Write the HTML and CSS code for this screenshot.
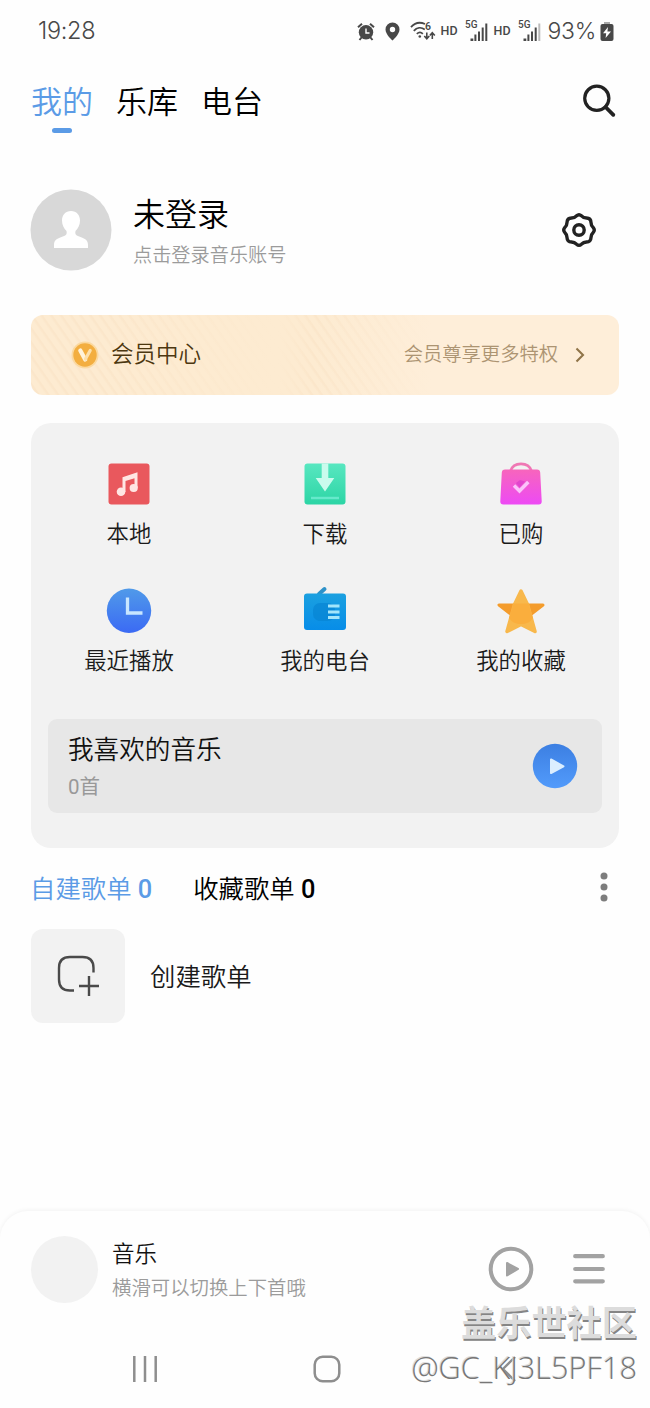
FILE: index.html
```html
<!DOCTYPE html>
<html lang="zh-CN">
<head>
<meta charset="utf-8">
<title>我的音乐</title>
<link rel="stylesheet" href="styles.css">
</head>
<body>
<div class="phone">
  <header class="status">
    <span class="time">19:28</span>
    <div class="status-icons">
      <svg class="alarm" width="18" height="19" viewBox="0 0 18 19"><circle cx="9" cy="10.3" r="7.200" fill="#484848"/><path d="M1 5.3 5 1.8M17 5.3 13 1.8M4.500 15.500 2.500 18M13.500 15.500l2 2.500" stroke="#484848" stroke-width="2" fill="none"/><path d="M9 6.500v4.500h3.500" stroke="#fff" stroke-width="1.400" fill="none"/></svg>
      <svg class="pin" width="15" height="19" viewBox="0 0 15 19"><path fill-rule="evenodd" d="M7.500.5a7 7 0 0 0-7 7c0 5 7 11 7 11s7-6 7-11a7 7 0 0 0-7-7Zm0 4.300a2.700 2.700 0 1 1 0 5.400 2.700 2.700 0 0 1 0-5.400Z" fill="#484848"/></svg>
      <svg class="wifi" width="26" height="20" viewBox="0 0 26 20"><g fill="none" stroke="#484848" stroke-width="1.800"><path d="M1 6.200C5 1.500 10.500 1 15 3M3.800 9.800c3-3.400 7.400-3.800 11-1.400M6.800 12.800c2-1.800 4.300-1.800 6 0"/><path d="M16.800 11.500v6M14.300 15l2.500 2.800 2.500-2.800M22.300 18v-6M19.800 14.500l2.500-2.800 2.500 2.800" stroke-width="1.600"/></g><circle cx="9.800" cy="15.500" r="1.300" fill="#484848"/><text x="15" y="9" class="wifi-num">6</text></svg>
      <span class="hd">HD</span>
      <svg class="signal" width="25" height="22" viewBox="0 0 25 22"><text x="0" y="8" class="net">5G</text><path d="M5.500 18.500h2.800v2.500H5.500ZM9.400 14.500h2v6.500h-2ZM13 11.500h2V21h-2ZM16.700 7.500h2V21h-2ZM20.300 3.500h2V21h-2Z" fill="#484848"/></svg>
      <span class="hd">HD</span>
      <svg class="signal" width="25" height="22" viewBox="0 0 25 22"><text x="0" y="8" class="net">5G</text><path d="M5.500 18.500h2.800v2.500H5.500ZM9.400 14.500h2v6.500h-2ZM13 11.500h2V21h-2ZM16.700 7.500h2V21h-2Z" fill="#484848"/><path d="M20.300 3.500h2V21h-2Z" fill="#bbb"/></svg>
      <span class="percent">93%</span>
      <svg class="battery" width="14" height="19" viewBox="0 0 14 19"><path d="M4 0h6v2H4Z" fill="#aaa"/><rect x=".5" y="2" width="13" height="17" rx="2" fill="#484848"/><path d="m8 5-5 6.200h3.200L5.600 16 11 9.600H7.400Z" fill="#fff"/></svg>
    </div>
  </header>

  <nav class="tabs">
    <span class="tab active">我的</span>
    <span class="tab">乐库</span>
    <span class="tab">电台</span>
    <svg class="search" width="34" height="34" viewBox="0 0 34 34" fill="none" stroke="#222"><circle cx="14.800" cy="14.300" r="12.100" stroke-width="3.200"/><path d="m23.500 23 7.800 7.800" stroke-width="3.800" stroke-linecap="round"/></svg>
  </nav>

  <section class="profile">
    <svg class="avatar" width="82" height="82" viewBox="0 0 82 82"><circle cx="41" cy="41" r="40.500" fill="#d8d8d8"/><path d="M41 22c5.500 0 9 4 9 9.500 0 4.500-2 8-4.500 10.500-.8 3 .5 4.300 3 5.300C54 49.500 58 50.500 58 56v3H24v-3c0-5.500 4-6.500 9.500-8.700 2.500-1 3.800-2.300 3-5.300C34 39.500 32 36 32 31.500 32 26 35.500 22 41 22Z" fill="#fff"/></svg>
    <div class="profile-text">
      <span class="name">未登录</span>
      <span class="hint">点击登录音乐账号</span>
    </div>
    <svg class="gear" width="36" height="36" viewBox="0 0 36 36" fill="none" stroke="#222" stroke-width="3.400" stroke-linejoin="round"><path d="M15.500 3.800Q18 1.700 20.500 3.800Q22.500 6 25.500 6Q29.800 6 30 10.500Q30 13.500 32.200 15.500Q34.300 18 32.200 20.500Q30 22.500 30 25.500Q29.800 30 25.500 30Q22.500 30 20.500 32.200Q18 34.300 15.500 32.200Q13.500 30 10.500 30Q6.200 30 6 25.500Q6 22.500 3.800 20.500Q1.700 18 3.800 15.500Q6 13.500 6 10.500Q6.200 6 10.500 6Q13.500 6 15.500 3.800Z"/><circle cx="18" cy="18" r="5.200"/></svg>
  </section>

  <section class="vip">
    <svg class="coin" width="28" height="28" viewBox="0 0 28 28"><circle cx="14" cy="14" r="13.500" fill="#fbd9a0"/><circle cx="14" cy="14" r="11.700" fill="#f3ae40"/><path d="M9.300 9.500 14.200 18.500" stroke="#fff3da" stroke-width="4.200" stroke-linecap="round"/><path d="m14.500 18 4.700-8.500" stroke="#fde0aa" stroke-width="3.200" stroke-linecap="round"/></svg>
    <span class="vip-title">会员中心</span>
    <span class="vip-hint">会员尊享更多特权</span>
    <svg class="chevron" width="10" height="16" viewBox="0 0 10 16"><path d="m1.500 1.500 6.500 6.500-6.500 6.500" fill="none" stroke="#8f7448" stroke-width="2.100"/></svg>
  </section>

  <section class="library">
    <div class="grid">
      <div class="item">
        <svg width="52" height="52" viewBox="0 0 52 52"><rect x="5.500" y="5.500" width="41" height="41" rx="3" fill="#e9585d"/><path d="M19.500 19.300 34.500 14.200V30h-3V20.300l-9 2.800V34h-3Z" fill="#ffe6e3"/><circle cx="18" cy="33.700" r="4.300" fill="#ffe6e3"/><circle cx="30.700" cy="30" r="4.100" fill="#ffe6e3"/></svg>
        <span>本地</span>
      </div>
      <div class="item">
        <svg width="52" height="52" viewBox="0 0 52 52"><defs><linearGradient id="down" x2="0" y2="1"><stop stop-color="#58e7c0"/><stop offset="1" stop-color="#2cd5a5"/></linearGradient></defs><rect x="5.500" y="5.500" width="41" height="41" rx="3" fill="url(#down)"/><path d="M22.700 5.500h6.600V20h6L26 33.500 16.700 20h6Z" fill="#c9fbed"/><path d="M12 40h28" stroke="#66e9cb" stroke-width="2.500"/></svg>
        <span>下载</span>
      </div>
      <div class="item">
        <svg width="52" height="52" viewBox="0 0 52 52"><defs><linearGradient id="bag" x2="0" y2="1"><stop stop-color="#f765bc"/><stop offset="1" stop-color="#ed4af5"/></linearGradient></defs><path d="M15.500 13c3-9.500 18-9.500 21 0" fill="none" stroke="#ef78b4" stroke-width="2.600"/><path d="M10 11.500h32q3 0 3.200 3L46.700 43q.3 3.500-3 3.500H8.300q-3.300 0-3-3.500L6.800 14.500q.2-3 3.200-3Z" fill="url(#bag)"/><path d="m21 25 4-3 5 1.500-5.500 6Z" fill="#d337c9" opacity=".6"/><path d="m19 27.500 5.500 5.500 8.800-9" fill="none" stroke="#fbc3fb" stroke-width="3.500"/></svg>
        <span>已购</span>
      </div>
      <div class="item">
        <svg width="52" height="52" viewBox="0 0 52 52"><defs><linearGradient id="clock" x2="0" y2="1"><stop stop-color="#509ae9"/><stop offset="1" stop-color="#3b6af4"/></linearGradient></defs><circle cx="26" cy="25.700" r="22.200" fill="url(#clock)"/><path d="M24.500 12.500V28H39.500" fill="none" stroke="#c8e6ff" stroke-width="3.300"/></svg>
        <span>最近播放</span>
      </div>
      <div class="item">
        <svg width="52" height="52" viewBox="0 0 52 52"><defs><linearGradient id="radio" x2="0" y2="1"><stop stop-color="#1ba0e0"/><stop offset="1" stop-color="#078de8"/></linearGradient></defs><path d="m20 9 5.500-5" stroke="#2e92c9" stroke-width="4" stroke-linecap="round"/><rect x="5" y="8.500" width="42" height="36.500" rx="3" fill="url(#radio)"/><rect x="14" y="18" width="22" height="18" rx="7" fill="#0785d3" opacity=".7"/><path d="M29 21h11.500M29 27h11.500M29 32.500h11.500" stroke="#a2e5fb" stroke-width="3.200"/></svg>
        <span>我的电台</span>
      </div>
      <div class="item">
        <svg width="52" height="52" viewBox="0 0 52 52"><path d="M4 20H48L26 37Z" fill="#f49c2c" stroke="#f49c2c" stroke-width="3" stroke-linejoin="round"/><path d="M26 6 32.500 19.500 40 46.500 26 39.500 12 46.500 19.500 19.500Z" fill="#f8b84c" stroke="#f8b84c" stroke-width="3.500" stroke-linejoin="round"/><path d="M18.500 18.500h15L38 33c-3 4.500-7 6-12 6s-9-1.500-12-6Z" fill="#faae3d"/></svg>
        <span>我的收藏</span>
      </div>
    </div>
    <div class="favorite">
      <div class="favorite-text">
        <span class="favorite-title">我喜欢的音乐</span>
        <span class="favorite-count">0首</span>
      </div>
      <svg width="46" height="46" viewBox="0 0 46 46"><defs><linearGradient id="play" x2="0" y2="1"><stop stop-color="#3c7fe2"/><stop offset="1" stop-color="#529bfb"/></linearGradient></defs><circle cx="23" cy="23" r="22.200" fill="url(#play)"/><path d="M19 16.500 31.500 23.300 19 30Z" fill="#dbeeff" stroke="#dbeeff" stroke-width="2" stroke-linejoin="round"/></svg>
    </div>
  </section>

  <section class="lists">
    <span class="list-tab active">自建歌单 <b>0</b></span>
    <span class="list-tab">收藏歌单 <b>0</b></span>
    <svg class="more" width="8" height="30" viewBox="0 0 8 30" fill="#7d7d7d"><circle cx="4" cy="4" r="3.500"/><circle cx="4" cy="15" r="3.500"/><circle cx="4" cy="26" r="3.500"/></svg>
  </section>

  <section class="create">
    <div class="create-tile">
      <svg width="42" height="42" viewBox="0 0 42 42" fill="none" stroke="#4a4a4a" stroke-width="2.400"><path d="M17 35.500H13Q2 35.500 2 24.500V13Q2 2 13 2H25.500Q36.500 2 36.500 13V17.500"/><path d="M32 21v20M22 31h20"/></svg>
    </div>
    <span class="create-label">创建歌单</span>
  </section>

  <footer class="player">
    <div class="disc"></div>
    <div class="player-text">
      <span class="track">音乐</span>
      <span class="swipe">横滑可以切换上下首哦</span>
    </div>
    <svg class="player-play" width="46" height="46" viewBox="0 0 46 46"><circle cx="23" cy="23" r="20.300" fill="none" stroke="#a2a2a2" stroke-width="4"/><path d="M19 17 30 23 19 29.500Z" fill="#a2a2a2" stroke="#a2a2a2" stroke-width="2" stroke-linejoin="round"/></svg>
    <svg class="queue" width="32" height="32" viewBox="0 0 32 32"><path d="M2.200 3.200h27.600M2.200 16h27.600M2.200 28.300h27.600" stroke="#a2a2a2" stroke-width="4.200" stroke-linecap="round"/></svg>
  </footer>

  <div class="sysnav">
    <svg width="28" height="28" viewBox="0 0 28 28"><path d="M3.300 1v26M14 1v26M24.700 1v26" stroke="#8e8e8e" stroke-width="2.500"/></svg>
    <svg width="28" height="28" viewBox="0 0 28 28"><rect x="1.700" y="1.700" width="24.600" height="24.600" rx="8" fill="none" stroke="#8e8e8e" stroke-width="2.500"/></svg>
    <svg width="28" height="28" viewBox="0 0 28 28"><path d="M20 2 8 14l12 12" fill="none" stroke="#8e8e8e" stroke-width="2.300"/></svg>
  </div>

  <div class="watermark">
    <span class="mark-name">盖乐世社区</span>
    <span class="mark-user">@GC_KJ3L5PF18</span>
  </div>
</div>
</body>
</html>
```
FILE: styles.css
```css
* { box-sizing: border-box; }
body { margin: 0; background: #fefefe; }
svg { display: block; flex: none; }

.phone {
  position: relative;
  width: 650px;
  height: 1408px;
  overflow: hidden;
  display: flex;
  flex-direction: column;
  font-family: Roboto, "Noto Sans CJK SC", sans-serif;
  font-weight: 350;
  color: #111;
  white-space: nowrap;
}

.status { height: 62px; padding: 0 36px 0 38px; display: flex; align-items: center; justify-content: space-between; color: #484848; }
.time { font: 350 23.500px/30px Inter, sans-serif; letter-spacing: -0.300px; }
.status-icons { display: flex; align-items: center; }
.pin { margin-left: 10px; }
.wifi { margin-left: 10px; }
.hd { font: 500 12.500px/20px Roboto, sans-serif; margin-left: 5px; width: 17px; }
.signal { margin-left: 7px; }
.signal + .hd { margin-left: 4px; }
.percent { font: 350 23px/30px Inter, sans-serif; letter-spacing: -0.300px; margin-left: 5px; }
.battery { margin-left: 4px; }
.net { font: 500 10px Roboto, sans-serif; fill: #484848; }
.wifi-num { font: 600 10.500px Roboto, sans-serif; fill: #484848; }

.tabs { height: 88px; padding: 14px 34px 0 31px; display: flex; gap: 23px; color: #000; }
.tab { font-size: 31px; line-height: 54px; height: 58px; width: 62px; }
.tab.active { color: #5b9be6; display: flex; flex-direction: column; align-items: center; }
.tab.active::after { content: ""; width: 20px; height: 5px; margin-top: -2px; flex: none; border-radius: 3px; background: #5b9be6; }
.search { margin: 8px 0 0 auto; }

.profile { height: 165px; padding: 0 53px 6px 30px; display: flex; align-items: center; }
.profile-text { margin-left: 21px; padding-top: 5px; display: flex; flex-direction: column; }
.name { font-size: 32px; line-height: 46px; color: #000; }
.hint { font-size: 19.200px; line-height: 35px; color: #9b9b9b; }
.gear { margin-left: auto; }

.vip {
  height: 80px; margin: 0 31px; padding: 0 34px 0 40px; border-radius: 12px;
  display: flex; align-items: center;
  background:
    linear-gradient(90deg, transparent 12%, #fdebd1 42%, transparent 48%, #feeed9 68%),
    repeating-linear-gradient(55deg, #fdebd1 0 4px, #fbe6ca 6px 7px, #fdebd1 8px);
}
.vip-title { font-size: 22.500px; line-height: 34px; padding-bottom: 3px; margin-left: 12px; color: #4c3710; }
.vip-hint { font-size: 19.300px; line-height: 34px; padding-bottom: 1px; margin-left: auto; color: #ac9472; }
.chevron { margin-left: 17px; }

.library { height: 425px; margin: 28px 31px 0; padding: 35px 17px 0; border-radius: 20px; background: #f2f2f2; }
.grid { display: grid; grid-template-columns: repeat(3, 196px); grid-auto-rows: 127px; margin: 0 -17px; height: 261px; }
.item { display: flex; flex-direction: column; align-items: center; font-size: 22.400px; line-height: 34px; gap: 7px; color: #1a1a1a; }
.favorite { height: 94px; border-radius: 9px; background: #e7e7e7; padding: 0 24px 0 20px; display: flex; align-items: center; justify-content: space-between; }
.favorite-text { padding-top: 4px; display: flex; flex-direction: column; }
.favorite-title { font-size: 25.600px; line-height: 38px; }
.favorite-count { font-size: 20.500px; line-height: 36px; font-weight: 380; color: #999; }

.lists { height: 81px; padding: 0 42px 4px 30px; display: flex; align-items: center; gap: 41px; font-size: 25.400px; color: #000; }
.list-tab b { font-weight: 500; }
.list-tab.active { color: #5b9be6; }
.more { margin-left: auto; }

.create { height: 94px; padding-left: 31px; display: flex; align-items: center; gap: 25px; font-size: 25.400px; color: #1a1a1a; }
.create-tile { width: 94px; height: 94px; border-radius: 12px; background: #f2f2f2; display: flex; align-items: center; justify-content: center; }
.create-label { padding-bottom: 3px; }

.player {
  height: 116px; margin-top: 188px; padding: 0 45px 0 31px; border-radius: 28px 28px 0 0;
  display: flex; align-items: center; background: #fefefe; box-shadow: 0 -1px 4px #0000000d;
}
.disc { width: 67px; height: 67px; border-radius: 50%; background: #f2f2f2; }
.player-text { margin-left: 14px; padding-top: 5px; display: flex; flex-direction: column; }
.track { font-size: 22.500px; line-height: 34px; }
.swipe { font-size: 19.400px; line-height: 35px; color: #9b9b9b; }
.player-play { margin-left: auto; }
.queue { margin-left: 39px; }

.sysnav { flex: 1; padding: 3px 127px 0 131px; display: flex; align-items: center; justify-content: space-between; background: #fefefe; }

.watermark { position: absolute; right: 13px; top: 1298px; display: flex; flex-direction: column; align-items: flex-end; }
.mark-name { font: 700 35.200px/46px "Noto Sans CJK SC", sans-serif; color: #dcdcdc; text-shadow: 1px 2px 0 #858585; }
.mark-user { font: 300 30.700px/47px "Open Sans", sans-serif; color: #777; text-shadow: -1px -1px 0 #ddd; }
```
